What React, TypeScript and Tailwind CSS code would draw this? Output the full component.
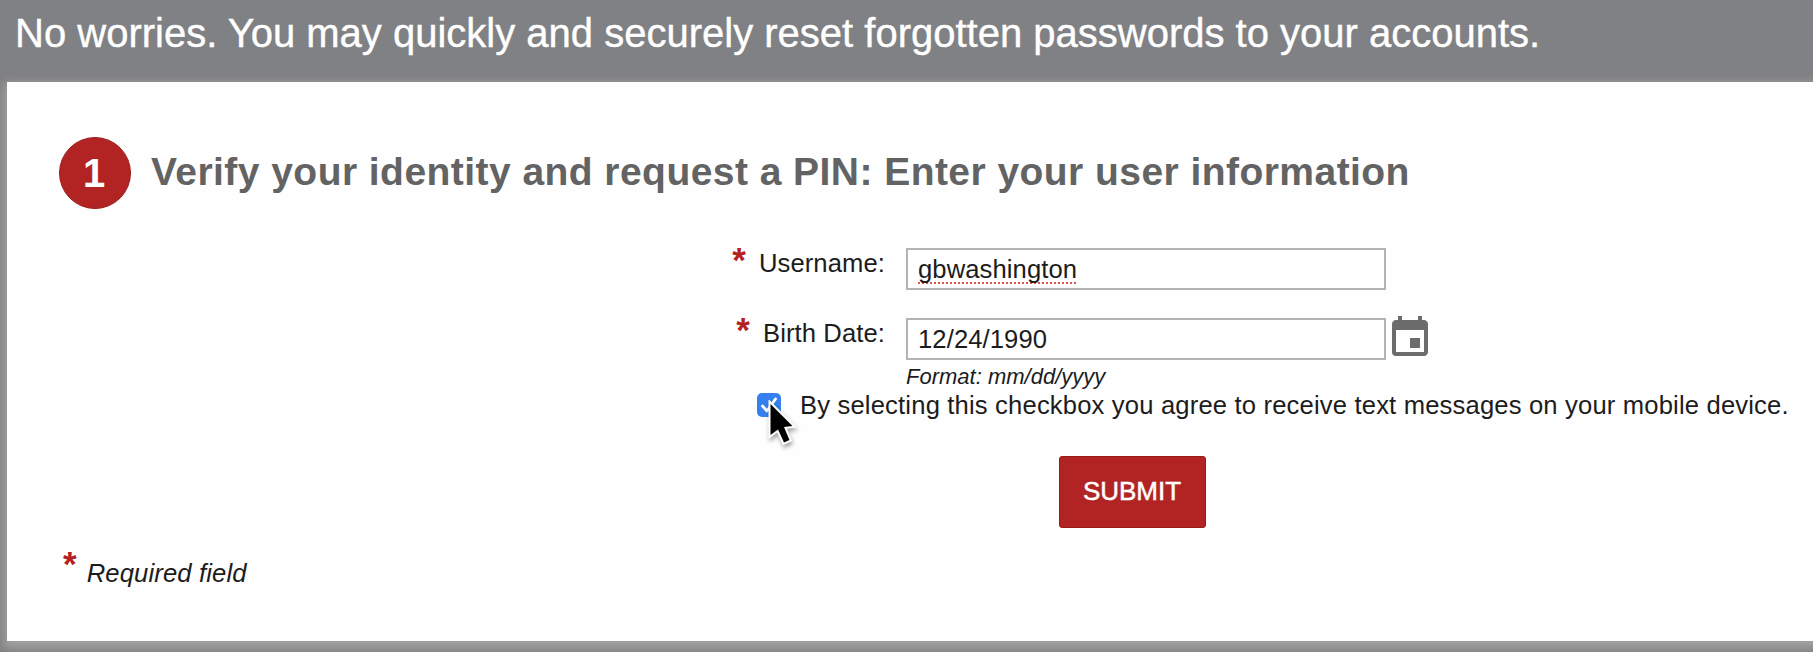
import React, { useState } from 'react';
import { MdEvent } from 'react-icons/md';

function Star() {
  return <span className="text-[35px] leading-[42px] font-bold text-[#b3201f]">*</span>;
}

function FieldLabel({ text, htmlFor }: { text: string; htmlFor: string }) {
  return (
    <div className="flex w-[885px] h-[42px] justify-end">
      <div className="-mt-[9px]"><Star /></div>
      <label htmlFor={htmlFor} className="ml-[13px] -mt-[6px] text-[25.6px] leading-[42px] tracking-[0.1px] whitespace-nowrap">{text}</label>
    </div>
  );
}

export default function App() {
  const [birthDate, setBirthDate] = useState('12/24/1990');
  const [agree, setAgree] = useState(true);

  return (
    <div className="w-[1813px] h-[652px] overflow-hidden bg-[#808184] font-['Liberation_Sans',Arial,sans-serif] text-[#1c1c1c]">

      {/* header */}
      <header className="h-[82px] pl-[15px]">
        <h1 className="text-[40px] leading-[66px] text-white whitespace-nowrap [-webkit-text-stroke:0.4px_#fff]">
          No worries. You may quickly and securely reset forgotten passwords to your accounts.
        </h1>
      </header>

      <main className="ml-[7px] h-[559px] w-[1830px] pt-[55px] bg-[#fefefe] shadow-[0_4px_9px_3px_#a2a2a2]">

        {/* step title */}
        <div className="flex items-center h-[72px] ml-[52px]">
          <div className="flex items-center justify-center w-[72px] h-[72px] pr-[2px] rounded-full bg-[#b22424] border border-[#9c1a1a] text-white text-[40px] font-bold">1</div>
          <h2 className="ml-[20px] pb-[3px] text-[39px] leading-[48px] tracking-[0.45px] font-bold text-[#636363] whitespace-nowrap">
            Verify your identity and request a PIN: Enter your user information
          </h2>
        </div>

        {/* form */}
        <form className="-ml-[7px] mt-[39px]" onSubmit={(e) => e.preventDefault()}>
          <div className="flex h-[42px] gap-[21px]">
            <FieldLabel text="Username:" htmlFor="username" />
            <div id="username" className="w-[480px] h-[42px] border-2 border-[#b4b4b4] bg-white pl-[10px] text-[25.6px] leading-[39px] tracking-[0.1px]">
              <span className="underline decoration-dotted decoration-[#e0524c] decoration-2 underline-offset-[4px] [text-decoration-skip-ink:none]">gbwashington</span>
            </div>
          </div>

          <div className="flex h-[42px] mt-[28px]">
            <FieldLabel text="Birth Date:" htmlFor="birthDate" />
            <input
              id="birthDate"
              value={birthDate}
              onChange={(e) => setBirthDate(e.target.value)}
              className="ml-[21px] w-[480px] h-[42px] border-2 border-[#b4b4b4] bg-white pl-[10px] text-[25.6px] leading-[38px] tracking-[0.1px]"
            />
            <MdEvent size={48} className="-mt-[4px] shrink-0 text-[#6c6c6c]" />
          </div>
          <p className="ml-[906px] h-[33px] text-[22px] leading-[33px] italic">Format: mm/dd/yyyy</p>

          <div className="flex items-center h-[24px] pl-[757px]">
            <button type="button" onClick={() => setAgree(!agree)} className="relative w-[24px] h-[24px] rounded-[5px] bg-[#3580ee]">
              {agree && (
                <svg viewBox="0 0 24 24" className="w-[24px] h-[24px]">
                  <path d="M5.5 13l4.5 5L18.5 6" fill="none" stroke="#fff" strokeWidth="2.8" strokeLinecap="round" strokeLinejoin="round" />
                </svg>
              )}
              {/* mouse pointer */}
              <svg viewBox="0 0 34 50" className="absolute left-[10px] top-[7px] w-[34px] h-[50px] drop-shadow-[1px_3px_2px_rgba(0,0,0,0.35)]">
                <path d="M3.5 4L25.5 26L17 27L22.5 40L17 42.5L11 29.5L3.5 35Z" fill="#000" stroke="#fff" strokeWidth="4" paintOrder="stroke" />
              </svg>
            </button>
            <span className="ml-[19px] text-[25.6px] leading-[24px] tracking-[0.17px] whitespace-nowrap">
              By selecting this checkbox you agree to receive text messages on your mobile device.
            </span>
          </div>

          <button type="submit" className="block ml-[1059px] mt-[39px] w-[147px] h-[72px] rounded-[3px] border border-[#981b1b] bg-[#b22424] pb-[2px] pr-px text-[26px] text-white [-webkit-text-stroke:0.5px_#fff]">
            SUBMIT
          </button>
        </form>

        <div className="flex ml-[56px] mt-[23px]">
          <div className="-mt-[8px]"><Star /></div>
          <span className="ml-[10px] mt-px text-[25.6px] leading-[42px] tracking-[0.15px] italic">Required field</span>
        </div>
      </main>
    </div>
  );
}
